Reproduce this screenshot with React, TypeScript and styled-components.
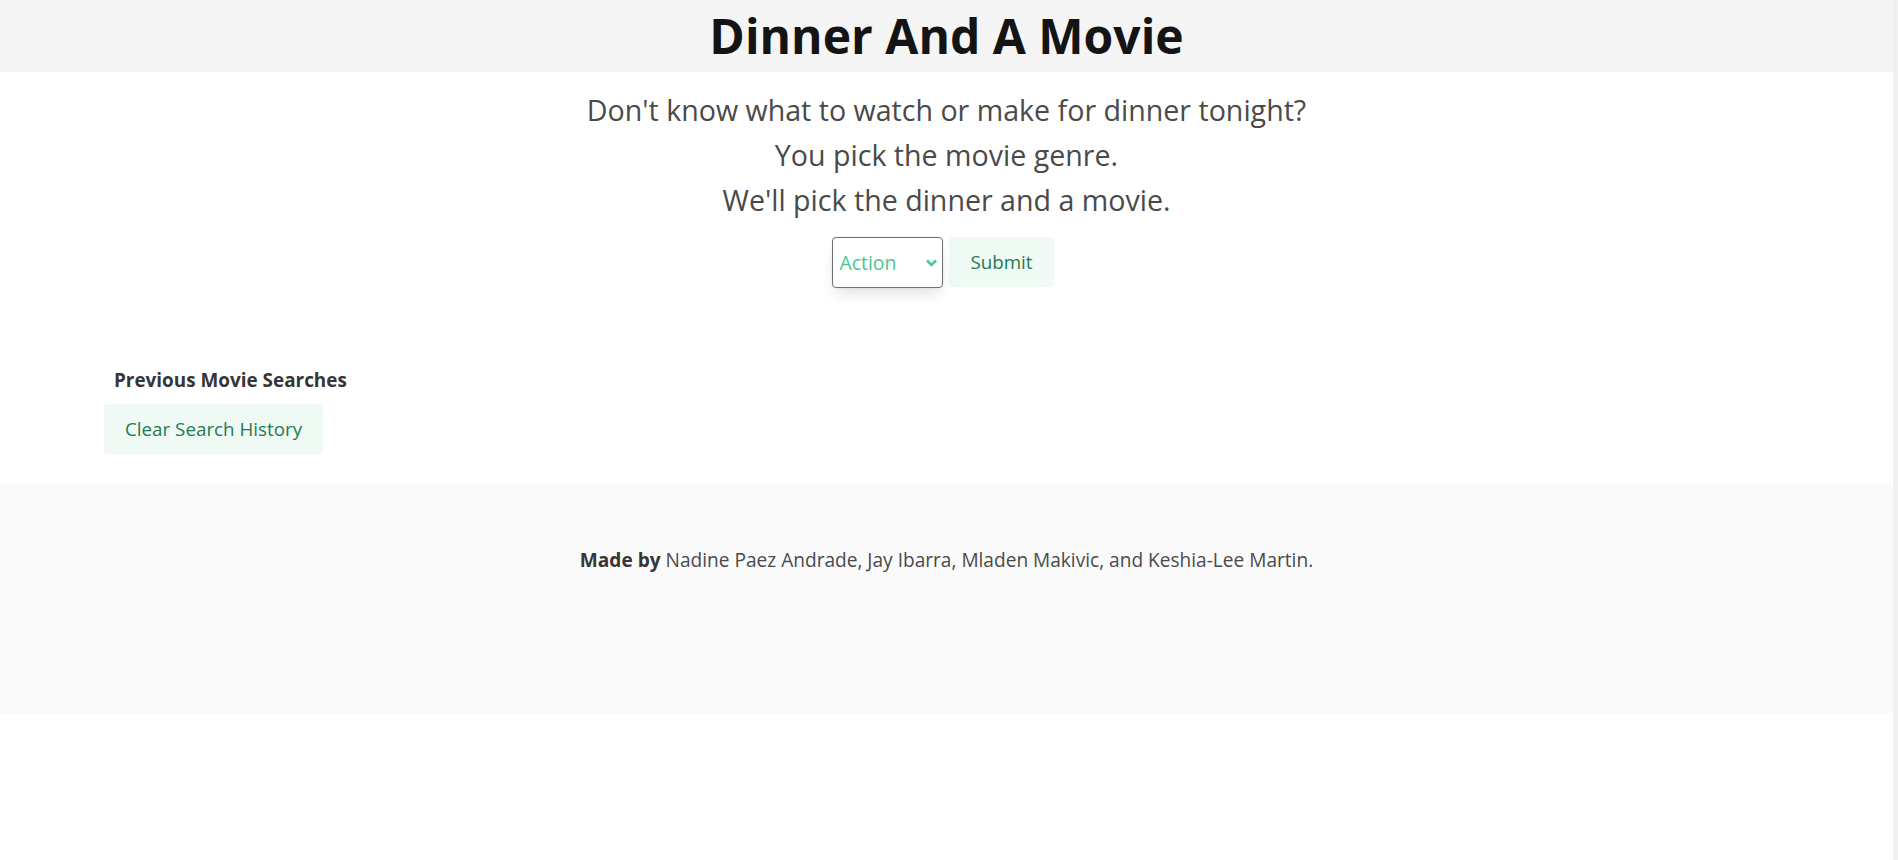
import React from "react";
import styled, { createGlobalStyle } from "styled-components";

const FONT = `"Open Sans", "Noto Sans", sans-serif`;

const GlobalStyle = createGlobalStyle`
  html, body { margin: 0; padding: 0; background: #fff; }
  body { font-family: ${FONT}; color: #4a4a4a; }
`;

const Page = styled.div`
  display: grid;
  grid-template-columns: 1fr 5px;
  min-height: 100vh;
`;
const Main = styled.div`
  display: flex;
  flex-direction: column;
`;
const Gutter = styled.div`
  background: #f0f0f0;
`;

const Header = styled.header`
  height: 72px;
  background: #f5f5f5;
  display: flex;
  align-items: center;
  justify-content: center;
`;
const Title = styled.h1`
  margin: 0;
  font-size: 48px;
  font-weight: 700;
  color: #141414;
  line-height: 1;
`;
const Hero = styled.section`
  padding-top: 15px;
  text-align: center;
`;
const Line = styled.p`
  margin: 0;
  font-size: 28.6px;
  line-height: 45px;
  color: #4a4a4a;
`;
const FormRow = styled.div`
  display: flex;
  justify-content: center;
  gap: 6px;
  margin-top: 15px;
  padding-right: 7px;
`;
const SelectWrap = styled.div`
  position: relative;
  height: 51px;
  width: 111px;
  box-sizing: border-box;
  border: 1px solid #6f6f6f;
  border-radius: 4px;
  background: #fff;
  box-shadow: 0 8px 16px -4px rgba(10, 10, 10, 0.14), 0 0 0 1px rgba(10, 10, 10, 0.02);
`;
const Select = styled.select`
  appearance: none;
  border: none;
  background: transparent;
  outline: none;
  width: 100%;
  height: 100%;
  font-family: ${FONT};
  font-size: 19.4px;
  color: #48c78e;
  padding: 0 0 0 6px;
  cursor: pointer;
`;
const Chevron = styled.svg`
  position: absolute;
  right: 4px;
  top: 20px;
  width: 13px;
  height: 10px;
  pointer-events: none;
`;
const Button = styled.button<{ $offset?: number }>`
  height: 50px;
  box-sizing: border-box;
  border: 1px solid transparent;
  border-radius: 4px;
  background: #effaf5;
  color: #257953;
  font-family: ${FONT};
  font-size: 18.8px;
  padding: 0 20px;
  margin-top: ${(p) => p.$offset ?? 0}px;
  cursor: pointer;
`;
const History = styled.section`
  margin-top: 77px;
  padding: 0 104px;
  display: flex;
  flex-direction: column;
  align-items: flex-start;
`;
const HistoryTitle = styled.h2`
  margin: 0 0 0 10px;
  font-size: 18.9px;
  font-weight: 700;
  color: #363636;
  line-height: 30px;
`;
const Footer = styled.footer`
  margin-top: 30px;
  height: 229px;
  background: #fafafa;
  box-sizing: border-box;
  padding-top: 62px;
  text-align: center;
  font-size: 19.1px;
  line-height: 28px;
  color: #4a4a4a;
`;
const Strong = styled.strong`
  color: #363636;
`;

export default function App() {
  return (
    <>
      <GlobalStyle />
      <Page>
        <Main>
          <Header>
            <Title>Dinner And A Movie</Title>
          </Header>
          <Hero>
            <Line>Don't know what to watch or make for dinner tonight?</Line>
            <Line>You pick the movie genre.</Line>
            <Line>We'll pick the dinner and a movie.</Line>
            <FormRow>
              <SelectWrap>
                <Select defaultValue="Action">
                  <option>Action</option>
                  <option>Comedy</option>
                  <option>Drama</option>
                  <option>Horror</option>
                </Select>
                <Chevron viewBox="0 0 13 10">
                  <path d="M2 2.5 L6.5 7 L11 2.5" fill="none" stroke="#48c78e" strokeWidth="2.6" />
                </Chevron>
              </SelectWrap>
              <Button>Submit</Button>
            </FormRow>
          </Hero>
          <History>
            <HistoryTitle>Previous Movie Searches</HistoryTitle>
            <Button $offset={9}>Clear Search History</Button>
          </History>
          <Footer>
            <Strong>Made by</Strong> Nadine Paez Andrade, Jay Ibarra, Mladen Makivic, and Keshia-Lee Martin.
          </Footer>
        </Main>
        <Gutter />
      </Page>
    </>
  );
}
